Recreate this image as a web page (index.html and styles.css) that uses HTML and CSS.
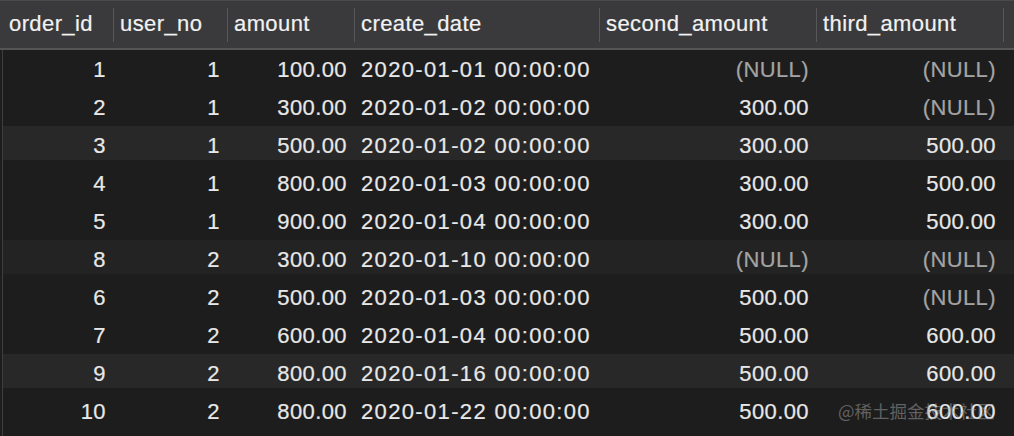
FILE: index.html
```html
<!DOCTYPE html>
<html>
<head>
<meta charset="utf-8">
<link rel="stylesheet" href="styles.css">
</head>
<body>
<div class="grid">
  <div class="row head">
    <div class="hc">order_id</div>
    <div class="hc">user_no</div>
    <div class="hc">amount</div>
    <div class="hc">create_date</div>
    <div class="hc">second_amount</div>
    <div class="hc">third_amount</div>
    <div class="hc last"></div>
  </div>
  <div class="row">
    <div class="c r">1</div><div class="c r">1</div><div class="c r">100.00</div><div class="c l">2020-01-01 00:00:00</div><div class="c r null">(NULL)</div><div class="c r null">(NULL)</div><div class="c"></div>
  </div>
  <div class="row">
    <div class="c r">2</div><div class="c r">1</div><div class="c r">300.00</div><div class="c l">2020-01-02 00:00:00</div><div class="c r">300.00</div><div class="c r null">(NULL)</div><div class="c"></div>
  </div>
  <div class="row alt">
    <div class="c r">3</div><div class="c r">1</div><div class="c r">500.00</div><div class="c l">2020-01-02 00:00:00</div><div class="c r">300.00</div><div class="c r">500.00</div><div class="c"></div>
  </div>
  <div class="row">
    <div class="c r">4</div><div class="c r">1</div><div class="c r">800.00</div><div class="c l">2020-01-03 00:00:00</div><div class="c r">300.00</div><div class="c r">500.00</div><div class="c"></div>
  </div>
  <div class="row">
    <div class="c r">5</div><div class="c r">1</div><div class="c r">900.00</div><div class="c l">2020-01-04 00:00:00</div><div class="c r">300.00</div><div class="c r">500.00</div><div class="c"></div>
  </div>
  <div class="row alt2">
    <div class="c r">8</div><div class="c r">2</div><div class="c r">300.00</div><div class="c l">2020-01-10 00:00:00</div><div class="c r null">(NULL)</div><div class="c r null">(NULL)</div><div class="c"></div>
  </div>
  <div class="row">
    <div class="c r">6</div><div class="c r">2</div><div class="c r">500.00</div><div class="c l">2020-01-03 00:00:00</div><div class="c r">500.00</div><div class="c r null">(NULL)</div><div class="c"></div>
  </div>
  <div class="row">
    <div class="c r">7</div><div class="c r">2</div><div class="c r">600.00</div><div class="c l">2020-01-04 00:00:00</div><div class="c r">500.00</div><div class="c r">600.00</div><div class="c"></div>
  </div>
  <div class="row alt">
    <div class="c r">9</div><div class="c r">2</div><div class="c r">800.00</div><div class="c l">2020-01-16 00:00:00</div><div class="c r">500.00</div><div class="c r">600.00</div><div class="c"></div>
  </div>
  <div class="row">
    <div class="c r">10</div><div class="c r">2</div><div class="c r">800.00</div><div class="c l">2020-01-22 00:00:00</div><div class="c r">500.00</div><div class="c r">600.00</div><div class="c"></div>
  </div>
</div>
<div class="watermark">@稀土掘金技术社区</div>
</body>
</html>
```

FILE: styles.css
```css
html, body {
  margin: 0;
  padding: 0;
  background: #1d1d1d;
  width: 1014px;
  height: 436px;
  overflow: hidden;
}
body {
  position: relative;
  font-family: "Liberation Sans", Arial, sans-serif;
  color: #e8e8e8;
}
.grid {
  border-left: 1px solid #3e3e3e;
  margin-left: 2px;
  height: 436px;
}
.row {
  display: grid;
  grid-template-columns: 111px 114px 127px 245px 217px 187px 1fr;
  height: 38px;
  font-size: 22px;
  letter-spacing: 0.4px;
  -webkit-text-stroke: 0.2px currentColor;
}
.row.head {
  height: 34px;
  padding: 7px 0 6px 3px;
  margin-left: -3px;
  background: #3a3a3c;
  border-top: 1px solid #4a4a4c;
  border-bottom: 2px solid #555557;
}
.hc {
  border-right: 1px solid #58585a;
  padding-left: 6px;
  line-height: 32px;
  color: #f2f2f2;
  white-space: nowrap;
  overflow: hidden;
}
.hc.last { border-right: none; }
.c {
  line-height: 40px;
  white-space: nowrap;
  overflow: hidden;
  padding-left: 1px;
}
.c.r { text-align: right; padding-right: 8px; }
.c.l { padding-left: 6px; letter-spacing: 1.35px; }
.null { color: #a3a3a3; }
.row.alt { background: linear-gradient(#282828 0 34px, transparent 34px); }
.row.alt2 { background: linear-gradient(#232323 0 34px, transparent 34px); }
.watermark {
  position: absolute;
  left: 838px;
  top: 398px;
  font-family: "Noto Sans CJK SC", sans-serif;
  font-size: 17.5px;
  color: rgba(165, 165, 165, 0.5);
}
```
